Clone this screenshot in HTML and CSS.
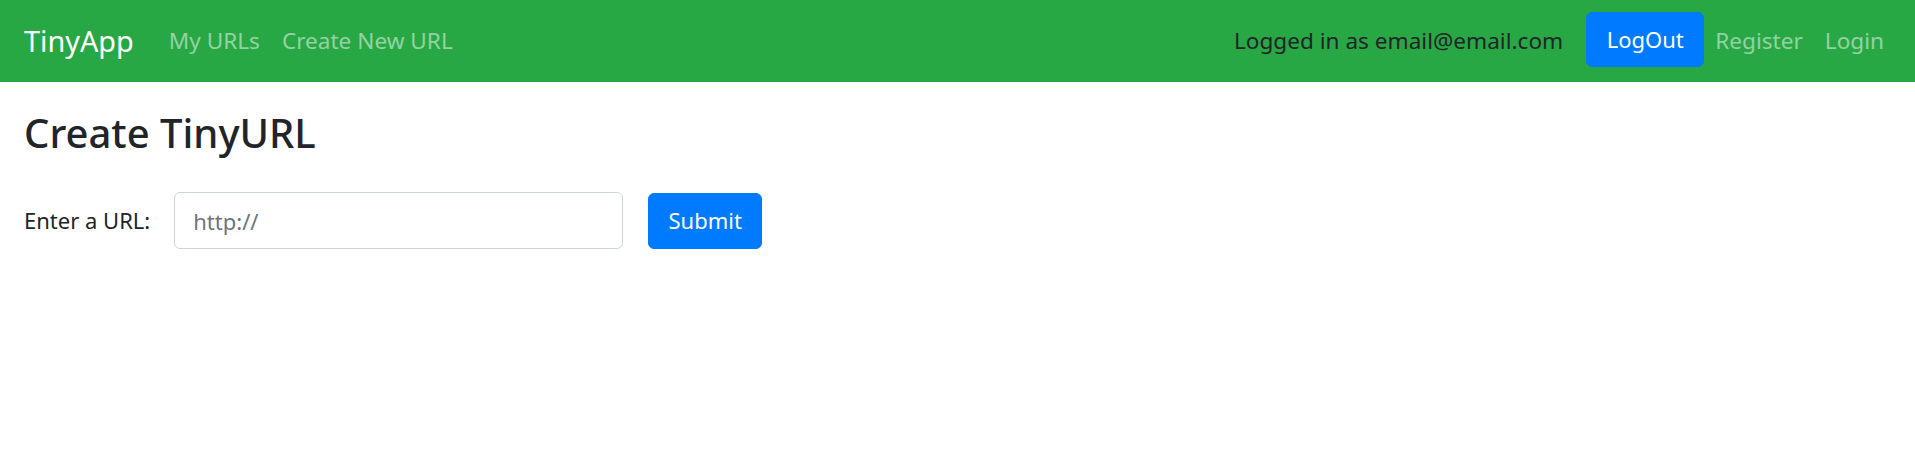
FILE: index.html
```html
<!DOCTYPE html>
<html lang="en">
<head>
<meta charset="utf-8">
<title>TinyApp</title>
<link rel="stylesheet" href="styles.css">
</head>
<body>
<nav class="navbar">
  <a class="brand" href="#">TinyApp</a>
  <div class="nav-left">
    <a class="nav-link" href="#">My URLs</a>
    <a class="nav-link" href="#">Create New URL</a>
  </div>
  <div class="nav-right">
    <span class="user">Logged in as email@email.com</span>
    <button class="btn btn-logout" type="button">LogOut</button>
    <a class="nav-link" href="#">Register</a>
    <a class="nav-link" href="#">Login</a>
  </div>
</nav>
<main class="content">
  <h2 class="title">Create TinyURL</h2>
  <form class="url-form">
    <label class="label" for="longURL">Enter a URL:</label>
    <input class="input" id="longURL" type="text" placeholder="http://">
    <button class="btn btn-submit" type="submit">Submit</button>
  </form>
</main>
</body>
</html>
```
FILE: styles.css
```css
* { box-sizing: border-box; }
html, body { margin: 0; padding: 0; }
body {
  font-family: "Noto Sans", "Open Sans", sans-serif;
  font-size: 22px;
  line-height: 1.5;
  color: #212529;
  background: #fff;
}
.navbar {
  display: flex;
  align-items: center;
  height: 82px;
  padding: 0 20px 0 24px;
  background: #28a745;
  font-size: 22.6px;
}
.brand {
  font-size: 28.8px;
  color: #fff;
  text-decoration: none;
  margin-right: 24px;
}
.nav-left, .nav-right {
  display: flex;
  align-items: center;
}
.nav-right { margin-left: auto; }
.nav-link {
  color: rgba(255, 255, 255, 0.5);
  text-decoration: none;
  padding: 0 11px;
}
.user {
  color: #212529;
  margin-right: 23px;
}
.btn {
  font-family: inherit;
  font-size: 22px;
  line-height: 1.5;
  border: 1px solid #007bff;
  background: #007bff;
  color: #fff;
  border-radius: 6px;
  cursor: pointer;
}
.btn-logout {
  height: 55px;
  width: 118px;
  padding: 0;
  margin-bottom: 3px;
}
.content {
  padding: 0 22px 0 24px;
}
.title {
  margin: 27px 0 0;
  font-size: 40px;
  font-weight: 500;
  line-height: 1.2;
}
.url-form {
  display: flex;
  align-items: center;
  margin-top: 35px;
}
.label {
  margin-right: 24px;
}
.input {
  width: 449px;
  height: 57px;
  padding: 0 18px;
  font-family: inherit;
  font-size: 22px;
  color: #495057;
  border: 1px solid #ced4da;
  border-radius: 6px;
  margin-right: 25px;
}
.input::placeholder { color: #6c757d; }
.btn-submit {
  width: 114px;
  height: 56px;
  padding: 0;
}
```
